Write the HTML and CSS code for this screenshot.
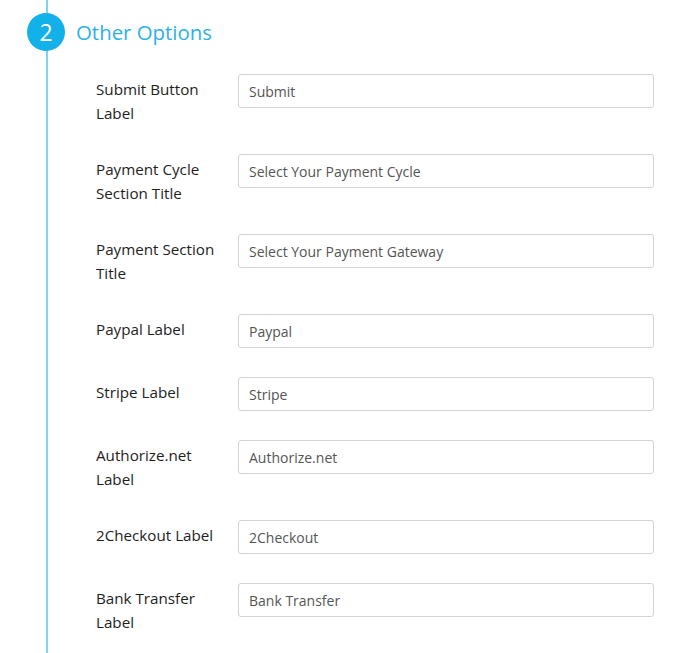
FILE: index.html
```html
<!DOCTYPE html>
<html lang="en">
<head>
    <meta charset="UTF-8">
    <meta name="viewport" content="width=device-width, initial-scale=1.0">
    <title>Other Options</title>
    <link rel="stylesheet" href="styles.css">
</head>
<body>
    <div class="step">
        <div class="step-head">
            <span class="step-num">2</span>
            <h2>Other Options</h2>
        </div>

        <div class="fields">
            <div class="field">
                <label for="submitLabel">Submit Button Label</label>
                <input type="text" id="submitLabel" value="Submit">
            </div>
            <div class="field">
                <label for="cycleTitle">Payment Cycle Section Title</label>
                <input type="text" id="cycleTitle" value="Select Your Payment Cycle">
            </div>
            <div class="field">
                <label for="paymentTitle">Payment Section Title</label>
                <input type="text" id="paymentTitle" value="Select Your Payment Gateway">
            </div>
            <div class="field">
                <label for="paypalLabel">Paypal Label</label>
                <input type="text" id="paypalLabel" value="Paypal">
            </div>
            <div class="field">
                <label for="stripeLabel">Stripe Label</label>
                <input type="text" id="stripeLabel" value="Stripe">
            </div>
            <div class="field">
                <label for="authorizeLabel">Authorize.net Label</label>
                <input type="text" id="authorizeLabel" value="Authorize.net">
            </div>
            <div class="field">
                <label for="checkoutLabel">2Checkout Label</label>
                <input type="text" id="checkoutLabel" value="2Checkout">
            </div>
            <div class="field">
                <label for="bankLabel">Bank Transfer Label</label>
                <input type="text" id="bankLabel" value="Bank Transfer">
            </div>
        </div>
    </div>
</body>
</html>
```

FILE: styles.css
```css
body {
    margin: 0;
    background: #fff;
    font-family: 'Open Sans', sans-serif;
    color: #333;
}
.step {
    margin-left: 46px;
    border-left: 2px solid #7dd2f5;
    padding-top: 13px;
    min-height: 653px;
    box-sizing: border-box;
}
.step-head {
    display: flex;
    align-items: center;
    margin-left: -21px;
}
.step-num {
    width: 38px;
    height: 38px;
    border-radius: 50%;
    background: #12b1ea;
    color: #fff;
    font-size: 23px;
    line-height: 38px;
    text-align: center;
    flex-shrink: 0;
}
h2 {
    margin: 0 0 0 11px;
    font-size: 20.4px;
    font-weight: normal;
    color: #2ab1ec;
}
.fields {
    padding: 23px 0 0 48px;
}
.field {
    display: grid;
    grid-template-columns: 125px 416px;
    column-gap: 17px;
    align-items: start;
    margin-bottom: 29px;
}
label {
    padding-top: 3px;
    font-size: 15.2px;
    line-height: 24px;
    color: #1e1e1e;
}
input {
    box-sizing: border-box;
    width: 100%;
    height: 34px;
    padding: 0 10px;
    font-family: 'Open Sans', sans-serif;
    font-size: 14px;
    color: #555;
    border: 1px solid #d3d3d3;
    border-radius: 3px;
    background: #fff;
}
```
